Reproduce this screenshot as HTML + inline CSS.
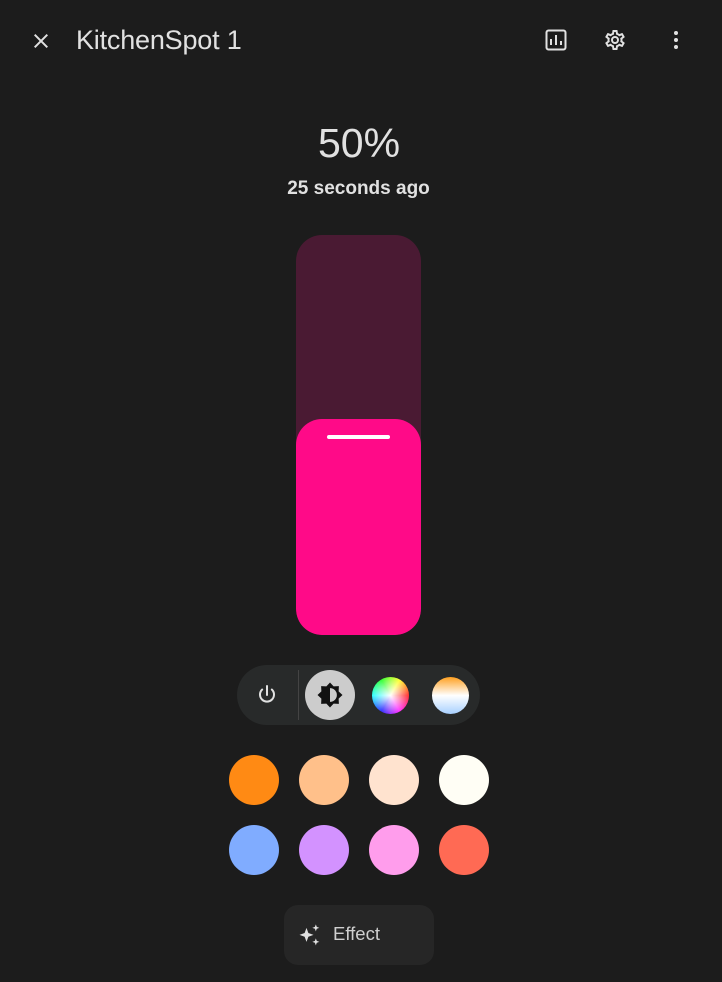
<!DOCTYPE html>
<html><head><style>
body{margin:0;width:722px;height:982px;background:#1c1c1c;font-family:"Liberation Sans",Roboto,sans-serif;position:relative;overflow:hidden;color:#e1e1e1}
.abs{position:absolute}
.sw{position:absolute;width:50px;height:50px;border-radius:50%}
</style></head><body>
<svg class="abs" style="left:29px;top:29px" width="24" height="24" viewBox="0 0 24 24"><path d="M19,6.41L17.59,5L12,10.59L6.41,5L5,6.41L10.59,12L5,17.59L6.41,19L12,13.41L17.59,19L19,17.59L13.41,12L19,6.41Z" fill="#e1e1e1"/></svg>
<div class="abs" style="left:76px;top:23px;font-size:27px;line-height:34px;letter-spacing:-0.2px">KitchenSpot 1</div>
<svg class="abs" style="left:544px;top:28px" width="24" height="24" viewBox="0 0 24 24"><rect x="2.5" y="2.5" width="19" height="19" rx="2" fill="none" stroke="#e1e1e1" stroke-width="2"/><path d="M7 17V11M12 17V7M17 17v-4" stroke="#e1e1e1" stroke-width="2"/></svg>
<svg class="abs" style="left:603px;top:28px" width="24" height="24" viewBox="0 0 24 24"><path d="M12,8A4,4 0 0,1 16,12A4,4 0 0,1 12,16A4,4 0 0,1 8,12A4,4 0 0,1 12,8M12,10A2,2 0 0,0 10,12A2,2 0 0,0 12,14A2,2 0 0,0 14,12A2,2 0 0,0 12,10M10,22C9.75,22 9.54,21.82 9.5,21.58L9.13,18.930C8.5,18.68 7.96,18.34 7.44,17.94L4.950,18.95C4.73,19.03 4.46,18.95 4.34,18.73L2.34,15.27C2.21,15.05 2.27,14.78 2.46,14.63L4.57,12.97L4.5,12L4.57,11L2.46,9.37C2.27,9.22 2.21,8.95 2.34,8.73L4.34,5.27C4.46,5.05 4.73,4.96 4.95,5.05L7.44,6.05C7.96,5.66 8.5,5.32 9.13,5.07L9.5,2.42C9.54,2.18 9.75,2 10,2H14C14.25,2 14.46,2.18 14.5,2.42L14.87,5.07C15.5,5.32 16.04,5.66 16.56,6.05L19.05,5.05C19.27,4.96 19.54,5.05 19.66,5.27L21.66,8.73C21.79,8.95 21.73,9.22 21.54,9.37L19.43,11L19.5,12L19.43,13L21.54,14.63C21.73,14.78 21.79,15.05 21.66,15.27L19.66,18.73C19.54,18.950 19.27,19.04 19.05,18.95L16.56,17.95C16.04,18.34 15.5,18.68 14.87,18.93L14.5,21.58C14.46,21.82 14.25,22 14,22H10M11.25,4L10.88,6.61C9.68,6.86 8.62,7.5 7.85,8.39L5.44,7.35L4.69,8.65L6.8,10.2C6.4,11.37 6.4,12.64 6.8,13.8L4.68,15.36L5.43,16.66L7.86,15.62C8.63,16.5 9.68,17.14 10.87,17.38L11.24,20H12.76L13.13,17.39C14.32,17.14 15.37,16.5 16.14,15.62L18.57,16.66L19.32,15.36L17.2,13.81C17.6,12.64 17.6,11.37 17.2,10.2L19.31,8.65L18.56,7.35L16.15,8.39C15.38,7.5 14.32,6.86 13.12,6.62L12.75,4H11.25Z" fill="#e1e1e1"/></svg>
<svg class="abs" style="left:664px;top:28px" width="24" height="24" viewBox="0 0 24 24"><circle cx="12" cy="5" r="2" fill="#e1e1e1"/><circle cx="12" cy="12" r="2" fill="#e1e1e1"/><circle cx="12" cy="19" r="2" fill="#e1e1e1"/></svg>

<div class="abs" style="left:0;width:718px;top:118px;text-align:center;font-size:41px;line-height:50px">50%</div>
<div class="abs" style="left:0;width:717px;top:177px;text-align:center;font-size:19px;font-weight:bold;line-height:24px">25 seconds ago</div>

<div class="abs" style="left:296px;top:235px;width:125px;height:400px;border-radius:26px;background:#4a1a33;overflow:hidden">
  <div class="abs" style="left:0;top:184px;width:125px;height:216px;border-radius:26px;background:#ff0a88"></div>
  <div class="abs" style="left:31px;top:200px;width:63px;height:4px;border-radius:2px;background:#fff"></div>
</div>

<div class="abs" style="left:237px;top:665px;width:243px;height:60px;border-radius:30px;background:#282a2a"></div>
<svg class="abs" style="left:255px;top:683px" width="24" height="24" viewBox="0 0 24 24"><path d="M12 3v9" stroke="#e1e1e1" stroke-width="2" stroke-linecap="round"/><path d="M7.2 6.5A7 7 0 1 0 16.8 6.5" fill="none" stroke="#e1e1e1" stroke-width="2" stroke-linecap="round"/></svg>
<div class="abs" style="left:298px;top:670px;width:1px;height:50px;background:#444"></div>
<div class="abs" style="left:305px;top:670px;width:50px;height:50px;border-radius:50%;background:#ccc"></div>
<svg class="abs" style="left:315px;top:680px" width="30" height="30" viewBox="0 0 24 24"><path d="M12 2l2.9 3.1 4.2-.2-.2 4.2L22 12l-3.1 2.9.2 4.2-4.2-.2L12 22l-2.9-3.1-4.2.2.2-4.2L2 12l3.1-2.9-.2-4.2 4.2.2z" fill="#111"/><path d="M12 6.5a5.5 5.5 0 0 1 0 11z" fill="#ccc"/></svg>
<div class="abs" style="left:372px;top:677px;width:37px;height:37px;border-radius:50%;background:radial-gradient(circle,#fff 0%,rgba(255,255,255,0) 70%),conic-gradient(from 90deg,#f33,#f3f,#33f,#3ff,#3f3,#ff3,#f33)"></div>
<div class="abs" style="left:432px;top:677px;width:37px;height:37px;border-radius:50%;background:linear-gradient(#ffa020,#fff 50%,#a8d0ff)"></div>

<div class="sw" style="left:229px;top:755px;background:#ff8a14"></div>
<div class="sw" style="left:299px;top:755px;background:#ffc08a"></div>
<div class="sw" style="left:369px;top:755px;background:#ffe3cf"></div>
<div class="sw" style="left:439px;top:755px;background:#fffef5"></div>
<div class="sw" style="left:229px;top:825px;background:#80acff"></div>
<div class="sw" style="left:299px;top:825px;background:#d392ff"></div>
<div class="sw" style="left:369px;top:825px;background:#ff9dec"></div>
<div class="sw" style="left:439px;top:825px;background:#ff6a54"></div>

<div class="abs" style="left:284px;top:905px;width:150px;height:60px;border-radius:14px;background:#262626"></div>
<svg class="abs" style="left:296px;top:922px" width="28" height="28" viewBox="0 0 24 24"><path d="M9 5l1.6 4.4L15 11l-4.4 1.6L9 17l-1.6-4.4L3 11l4.4-1.6z M17 2l.8 2.2L20 5l-2.2.8L17 8l-.8-2.2L14 5l2.2-.8z M17 14l.8 2.2L20 17l-2.2.8L17 20l-.8-2.2L14 17l2.2-.8z" fill="#e1e1e1"/></svg>
<div class="abs" style="left:333px;top:923px;font-size:18.5px;line-height:22px;color:#cfcfcf">Effect</div>
</body></html>
